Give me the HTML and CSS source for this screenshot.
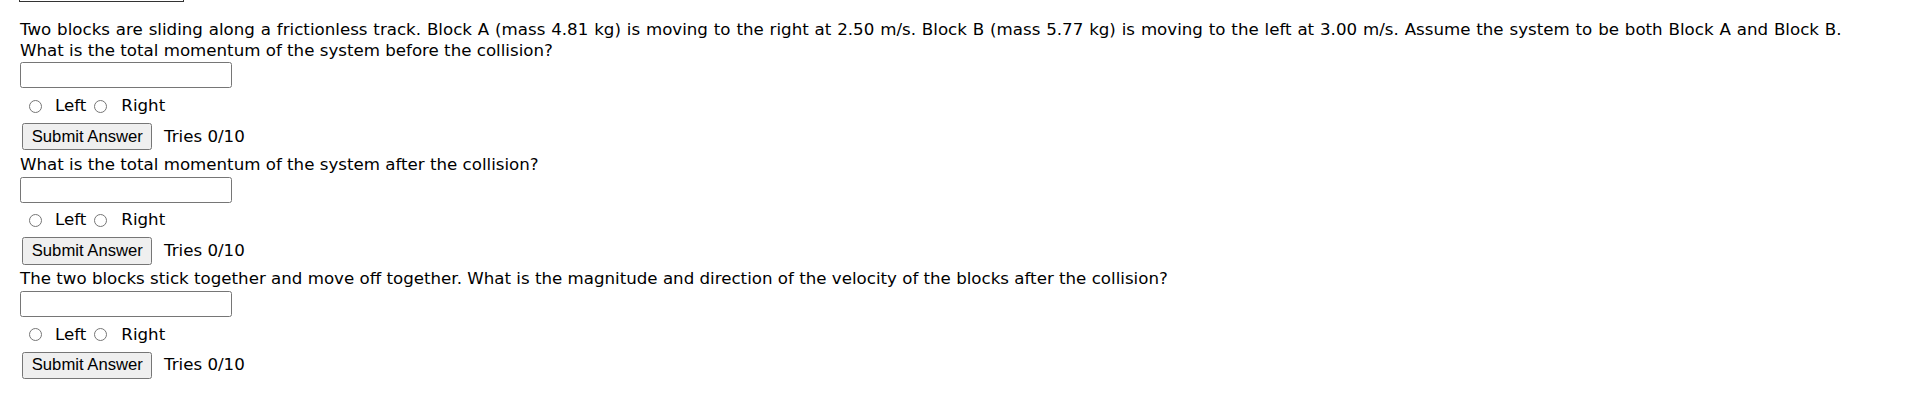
FILE: index.html
```html
<!DOCTYPE html>
<html lang="en">
<head>
<meta charset="utf-8">
<title>Collision problem</title>
<link rel="stylesheet" href="styles.css">
</head>
<body>
<div class="topbox"></div>
<div class="problem">
  <div class="part">
    <p class="qtext"><span class="lead">Two blocks are sliding along a frictionless track. Block A (mass 4.81 kg) is moving to the right at 2.50 m/s. Block B (mass 5.77 kg) is moving to the left at 3.00 m/s. Assume the system to be both Block A and Block B.</span><br>What is the total momentum of the system before the collision?</p>
    <input class="answer" type="text">
    <div class="dirs">
      <label class="dir"><input class="radio" type="radio" name="d1">Left</label>
      <label class="dir"><input class="radio" type="radio" name="d1">Right</label>
    </div>
    <div class="submitrow">
      <button class="submit" type="button">Submit Answer</button>
      <span class="tries">Tries 0/10</span>
    </div>
  </div>
  <div class="part">
    <p class="qtext">What is the total momentum of the system after the collision?</p>
    <input class="answer" type="text">
    <div class="dirs">
      <label class="dir"><input class="radio" type="radio" name="d2">Left</label>
      <label class="dir"><input class="radio" type="radio" name="d2">Right</label>
    </div>
    <div class="submitrow">
      <button class="submit" type="button">Submit Answer</button>
      <span class="tries">Tries 0/10</span>
    </div>
  </div>
  <div class="part">
    <p class="qtext">The two blocks stick together and move off together. What is the magnitude and direction of the velocity of the blocks after the collision?</p>
    <input class="answer" type="text">
    <div class="dirs">
      <label class="dir"><input class="radio" type="radio" name="d3">Left</label>
      <label class="dir"><input class="radio" type="radio" name="d3">Right</label>
    </div>
    <div class="submitrow">
      <button class="submit" type="button">Submit Answer</button>
      <span class="tries">Tries 0/10</span>
    </div>
  </div>
</div>
</body>
</html>
```
FILE: styles.css
```css
html, body {
  margin: 0;
  padding: 0;
  background: #ffffff;
}
body {
  font-family: "DejaVu Sans", Verdana, sans-serif;
  font-size: 16.67px;
  line-height: 20.5px;
  color: #000000;
  padding-left: 20px;
}
.topbox {
  width: 165px;
  height: 2px;
  margin-left: -1px;
  box-sizing: border-box;
  border: 1px solid #333333;
  border-top: none;
  margin-bottom: 18px;
}
.part {
  display: flex;
  flex-direction: column;
  align-items: flex-start;
}
.part + .part {
  margin-top: 4.6px;
}
.qtext {
  margin: 0;
}
.lead {
  word-spacing: 0.57px;
}
.answer {
  display: block;
  margin: 1.3px 0 0 0;
  width: 212px;
  height: 26px;
  box-sizing: border-box;
  border: 1px solid #767676;
  border-radius: 2.5px;
  background: #ffffff;
  padding: 1px 3px;
  font: inherit;
}
.dirs {
  display: flex;
  align-items: center;
  height: 20.5px;
  margin-top: 7.7px;
}
.dir {
  display: flex;
  align-items: center;
}
.radio {
  appearance: none;
  -webkit-appearance: none;
  width: 13px;
  height: 13px;
  margin: 0 13px 0 9px;
  box-sizing: border-box;
  border: 1px solid #767676;
  border-radius: 50%;
  background: #ffffff;
}
.dir + .dir .radio {
  margin-left: 8px;
  margin-right: 14px;
}
.submitrow {
  display: flex;
  align-items: baseline;
  margin-top: 6.5px;
}
.submit {
  margin: 0 11.7px 0 2.3px;
  width: 130px;
  height: 27.3px;
  padding: 0;
  box-sizing: border-box;
  border: 1px solid #767676;
  border-radius: 2.5px;
  background: #efefef;
  color: #000000;
  font-family: "Liberation Sans", Arial, sans-serif;
  font-size: 16.67px;
  line-height: normal;
}
```
